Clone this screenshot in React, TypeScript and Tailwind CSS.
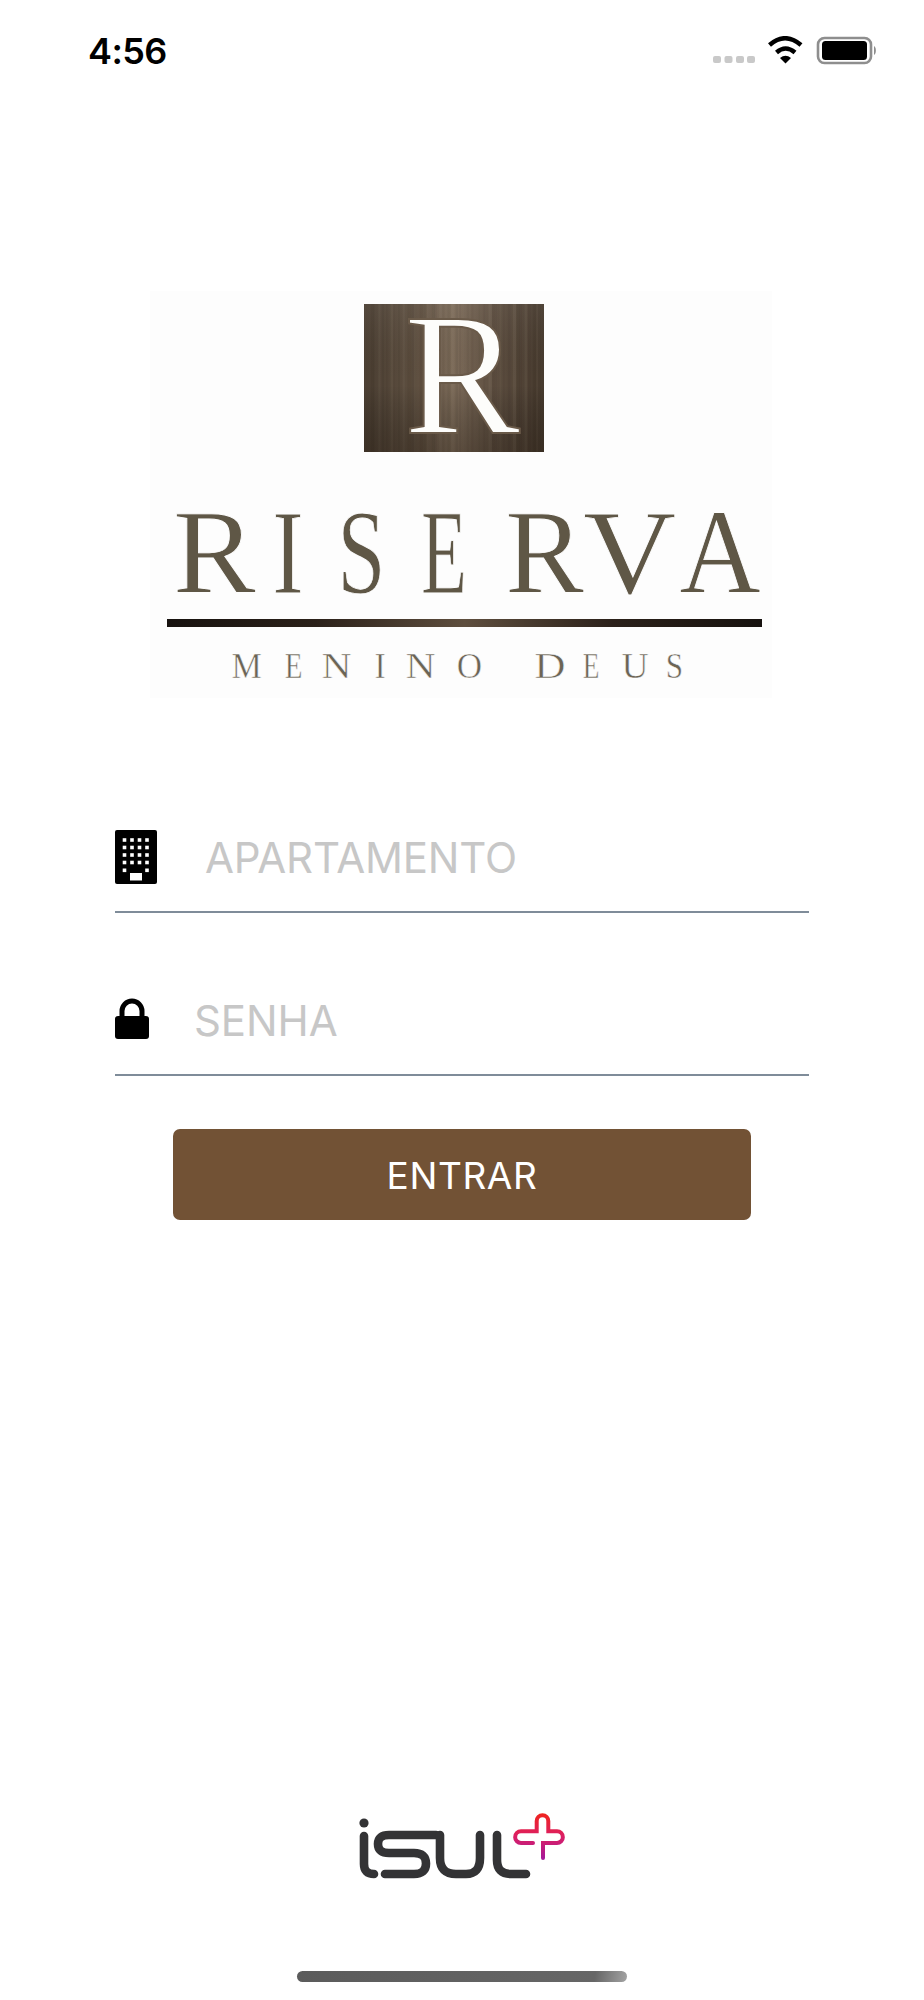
const grain = Array.from({ length: 44 }, (_, i) => {
  const n = Math.sin(i * 12.9898) * 43758.5453;
  const r = n - Math.floor(n);
  return { x: 1 + i * 4.05 + r * 2, w: 1 + r * 2.4, o: 0.02 + r * 0.07, light: i % 3 === 0 };
});

const ink: Record<string, [number, number, number]> = {
  R: [0.017, 0.659, 0.667],
  I: [0.018, 0.315, 0.333],
  S: [0.042, 0.491, 0.556],
  E: [0.012, 0.597, 0.611],
  V: [0.016, 0.697, 0.722],
  A: [0.015, 0.706, 0.722],
  M: [0.012, 0.863, 0.889],
  N: [0.012, 0.707, 0.722],
  O: [0.034, 0.688, 0.722],
  D: [0.016, 0.685, 0.722],
  U: [0.014, 0.705, 0.722],
};

function FittedWord({
  letters,
  y,
  size,
  fill,
  thin,
}: {
  letters: [string, number, number][];
  y: number;
  size: number;
  fill: string;
  thin: number;
}) {
  return (
    <text y={y} fontFamily="'Liberation Serif', serif" fontSize={size} fill={fill} stroke="#fdfdfd" strokeWidth={thin}>
      {letters.map(([ch, x0, x1], i) => {
        const [l, r, adv] = ink[ch];
        const scale = (x1 - x0) / ((r - l) * size);
        return (
          <tspan key={i} x={x0 - l * size * scale} textLength={adv * size * scale} lengthAdjust="spacingAndGlyphs">
            {ch}
          </tspan>
        );
      })}
    </text>
  );
}

function Logo() {
  return (
    <svg width="622" height="407" viewBox="150 291 622 407" className="block overflow-visible">
      <defs>
        <linearGradient id="wood" x1="0" x2="1" y1="0" y2="0">
          <stop offset="0" stopColor="#4a3e32" />
          <stop offset="0.3" stopColor="#5f5041" />
          <stop offset="0.5" stopColor="#7c6b59" />
          <stop offset="0.72" stopColor="#5d4e40" />
          <stop offset="1" stopColor="#463a2e" />
        </linearGradient>
        <linearGradient id="shade" x1="0" x2="0" y1="0" y2="1">
          <stop offset="0" stopColor="#ffffff" stopOpacity="0.05" />
          <stop offset="0.55" stopColor="#000000" stopOpacity="0" />
          <stop offset="1" stopColor="#1c130b" stopOpacity="0.32" />
        </linearGradient>
        <linearGradient id="bar" x1="0" x2="1" y1="0" y2="0">
          <stop offset="0" stopColor="#17120f" />
          <stop offset="0.25" stopColor="#2b211a" />
          <stop offset="0.5" stopColor="#5e4e3e" />
          <stop offset="0.75" stopColor="#2b211a" />
          <stop offset="1" stopColor="#17120f" />
        </linearGradient>
      </defs>
      <rect x="150" y="291" width="622" height="407" fill="#fdfdfd" />
      <rect x="364" y="304" width="180" height="148" fill="url(#wood)" />
      {grain.map((g, i) => (
        <rect
          key={i}
          x={364 + g.x}
          y="304"
          width={g.w}
          height="148"
          fill={g.light ? "#c8b8a4" : "#1e150d"}
          opacity={g.o}
        />
      ))}
      <rect x="364" y="304" width="180" height="148" fill="url(#shade)" />
      <text
        x="404"
        y="433"
        fontFamily="'Liberation Serif', serif"
        fontSize="174"
        fill="#fdfdfb"
        stroke="#6a5a49"
        strokeWidth="2"
      >
        R
      </text>
      <FittedWord
        y={593}
        size={121}
        fill="#5f5746"
        thin={0.9}
        letters={[
          ["R", 175, 255],
          ["I", 274, 302],
          ["S", 341, 380],
          ["E", 422, 466],
          ["R", 507, 583],
          ["V", 585, 673],
          ["A", 681, 759],
        ]}
      />
      <rect x="167" y="619" width="595" height="8" fill="url(#bar)" />
      <FittedWord
        y={678}
        size={35}
        fill="#6b6455"
        thin={0.5}
        letters={[
          ["M", 232, 261],
          ["E", 285, 302],
          ["N", 322, 351],
          ["I", 375, 385],
          ["N", 406, 435],
          ["O", 458, 481],
          ["D", 535, 564],
          ["E", 583, 599],
          ["U", 622, 648],
          ["S", 667, 681],
        ]}
      />
    </svg>
  );
}

function StatusIcons() {
  return (
    <svg width="170" height="30" viewBox="710 36 170 30" className="block">
      {[713, 724.5, 736, 747].map((x) => (
        <rect key={x} x={x} y="56" width="8" height="7" rx="2" fill="#c9c9c9" />
      ))}
      <path d="M769.5 45 Q785 31.5 801 45" fill="none" stroke="#000" strokeWidth="4.5" />
      <path d="M776.5 52.5 Q785.5 44.5 795 52.5" fill="none" stroke="#000" strokeWidth="4.5" />
      <path d="M780 58 Q785.5 53.5 791 58 L785.5 63.5 Z" fill="#000" />
      <rect x="818" y="38" width="53" height="25" rx="6.5" fill="none" stroke="#8e8e8e" strokeWidth="2.6" />
      <rect x="822" y="41" width="45" height="19" rx="3.5" fill="#000" />
      <path d="M874 46 C876.5 47 876.5 54 874 55 Z" fill="#8e8e8e" />
    </svg>
  );
}

function BuildingIcon() {
  const rows = [840, 847.5, 855, 862.5];
  const cols = [124.5, 132, 139.5, 147];
  return (
    <svg width="42" height="54" viewBox="115 830 42 54" className="block">
      <rect x="115" y="830" width="42" height="54" rx="2" fill="#000" />
      {rows.flatMap((y) =>
        cols.map((x) => <rect key={`${x}-${y}`} x={x - 1.8} y={y - 1.8} width="3.6" height="3.6" fill="#fff" />)
      )}
      <rect x={122.7} y={868.5} width="3.6" height="3.6" fill="#fff" />
      <rect x={145.2} y={868.5} width="3.6" height="3.6" fill="#fff" />
      <rect x="130" y="873" width="12" height="7.5" fill="#fff" />
    </svg>
  );
}

function LockIcon() {
  return (
    <svg width="34" height="42" viewBox="115 997 34 42" className="block">
      <path d="M122 1016 V1011 A10 10 0 0 1 142 1011 V1016" fill="none" stroke="#000" strokeWidth="5" />
      <rect x="115" y="1016" width="34" height="23" rx="3" fill="#000" />
    </svg>
  );
}

function IsulLogo() {
  return (
    <svg width="210" height="70" viewBox="358 1811 210 70" className="block">
      <defs>
        <linearGradient id="plus" gradientUnits="userSpaceOnUse" x1="540" x2="540" y1="1813" y2="1859">
          <stop offset="0" stopColor="#f0241c" />
          <stop offset="0.5" stopColor="#dc1f63" />
          <stop offset="1" stopColor="#a4189a" />
        </linearGradient>
      </defs>
      <circle cx="364" cy="1823" r="4.6" fill="#333335" />
      <g fill="none" stroke="#333335" strokeWidth="8.6" strokeLinecap="round" strokeLinejoin="round">
        <path d="M364 1836 V1864 Q364 1874 374 1874" />
        <path d="M436 1835 H389 Q378 1835 378 1844 Q378 1853 389 1853 H414 Q426 1853 426 1863.5 Q426 1874 414 1874 H385" />
        <path d="M440 1835 V1858 Q440 1874 456 1874 H466 Q480 1874 480 1858 V1835" />
        <path d="M497 1835 V1860 Q497 1874 511 1874 H526" />
      </g>
      <path
        d="M533 1843 H521 A5.85 5.85 0 0 1 521 1831.3 H536.7 V1821 A5.8 5.8 0 0 1 548.3 1821 V1831.3 H557 A5.85 5.85 0 0 1 557 1843 H543 V1858"
        fill="none"
        stroke="url(#plus)"
        strokeWidth="4"
        strokeLinecap="round"
      />
    </svg>
  );
}

export default function App() {
  return (
    <div className="w-[924px] h-[2000px] bg-white flex flex-col font-['Inter',sans-serif]">
      <header className="h-[70px] flex items-start justify-between pt-[29px] pl-[88px] pr-[44px]">
        <span className="text-[36px] leading-[44px] font-semibold text-black tracking-[-0.6px]">4:56</span>
        <div className="pt-[7px]">
          <StatusIcons />
        </div>
      </header>

      <div className="mt-[221px] ml-[150px]">
        <Logo />
      </div>

      <form className="mt-[121px] mx-[115px] w-[694px] flex flex-col">
        <div className="h-[94px] flex items-start gap-[48px] pt-[11px] border-b-2 border-[#7f8c99]">
          <BuildingIcon />
          <span className="text-[#c7c7c7] text-[42px] leading-[50px] mt-[3px] tracking-[-0.2px]">APARTAMENTO</span>
        </div>
        <div className="h-[127px] mt-[36px] flex items-start gap-[45px] pt-[48px] border-b-2 border-[#7f8c99]">
          <LockIcon />
          <span className="text-[#c7c7c7] text-[42px] leading-[50px] -mt-[1px] tracking-[-0.1px]">SENHA</span>
        </div>
        <button
          type="button"
          className="mt-[53px] mx-[58px] h-[91px] pt-[3px] rounded-[7px] bg-[#725235] text-white text-[37px] leading-[44px] tracking-[0.6px]"
        >
          ENTRAR
        </button>
      </form>

      <div className="mt-auto flex flex-col items-center">
        <div className="ml-[2px]">
          <IsulLogo />
        </div>
        <div className="mt-[90px] mb-[18px] w-[330px] h-[11px] rounded-full bg-[linear-gradient(100deg,#5b5b5b_0%,#666666_90%,#a3a3a3_100%)]" />
      </div>
    </div>
  );
}
